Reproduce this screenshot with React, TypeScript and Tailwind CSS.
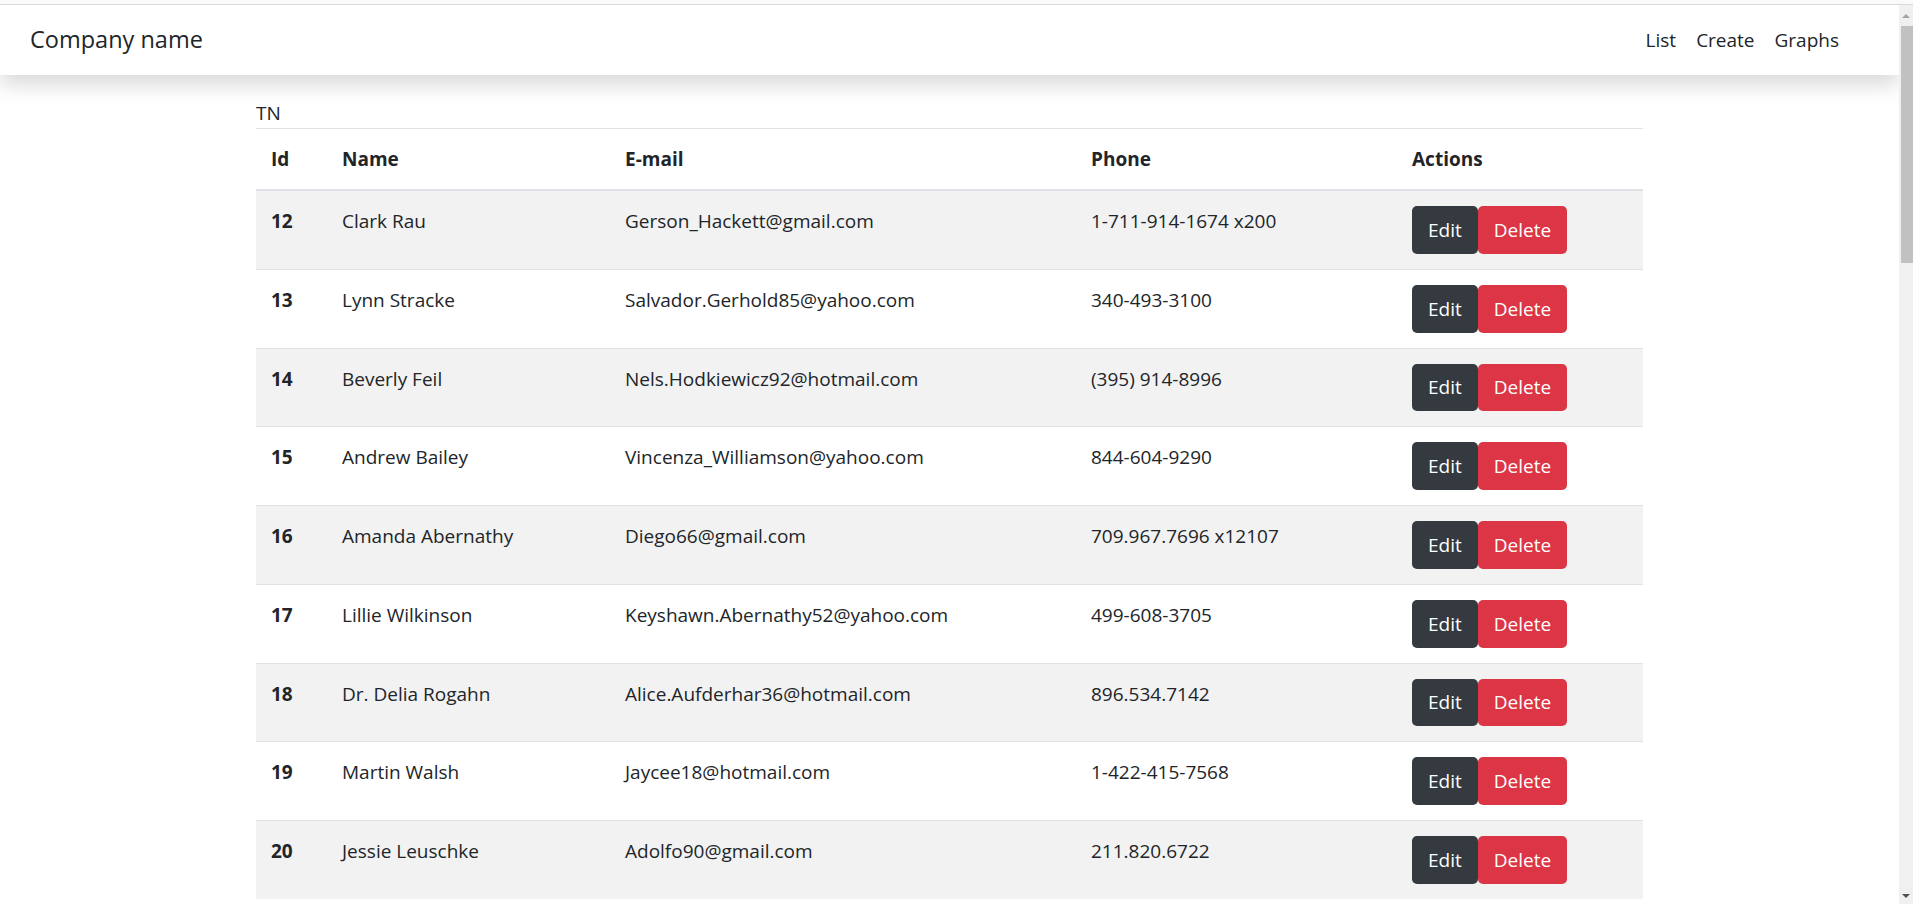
import React from 'react';

interface Person {
  id: number;
  name: string;
  email: string;
  phone: string;
}

const people: Person[] = [
  { id: 12, name: 'Clark Rau', email: 'Gerson_Hackett@gmail.com', phone: '1-711-914-1674 x200' },
  { id: 13, name: 'Lynn Stracke', email: 'Salvador.Gerhold85@yahoo.com', phone: '340-493-3100' },
  { id: 14, name: 'Beverly Feil', email: 'Nels.Hodkiewicz92@hotmail.com', phone: '(395) 914-8996' },
  { id: 15, name: 'Andrew Bailey', email: 'Vincenza_Williamson@yahoo.com', phone: '844-604-9290' },
  { id: 16, name: 'Amanda Abernathy', email: 'Diego66@gmail.com', phone: '709.967.7696 x12107' },
  { id: 17, name: 'Lillie Wilkinson', email: 'Keyshawn.Abernathy52@yahoo.com', phone: '499-608-3705' },
  { id: 18, name: 'Dr. Delia Rogahn', email: 'Alice.Aufderhar36@hotmail.com', phone: '896.534.7142' },
  { id: 19, name: 'Martin Walsh', email: 'Jaycee18@hotmail.com', phone: '1-422-415-7568' },
  { id: 20, name: 'Jessie Leuschke', email: 'Adolfo90@gmail.com', phone: '211.820.6722' },
];

const Navbar: React.FC = () => (
  <nav className="relative z-10 h-[70px] flex items-center justify-between bg-white pl-[30px] pr-[50px] shadow-[0_10px_20px_rgba(0,0,0,0.15)]">
    <span className="text-[23.5px] leading-[1.5]">Company name</span>
    <ul className="flex items-center text-[19px] leading-[1.5]">
      <li><a className="px-[10px]">List</a></li>
      <li><a className="px-[10px]">Create</a></li>
      <li><a className="px-[10px]">Graphs</a></li>
    </ul>
  </nav>
);

const FakeScrollbar: React.FC = () => (
  <div className="w-[14px] flex flex-col bg-[#f0f0f0]">
    <div className="h-[21px] flex items-center justify-center">
      <div className="w-0 h-0 border-l-[4px] border-r-[4px] border-b-[4px] border-l-transparent border-r-transparent border-b-[#a3a3a3]" />
    </div>
    <div className="ml-[2px] h-[237px] bg-[#c1c1c1]" />
    <div className="flex-1" />
    <div className="h-[17px] flex items-center justify-center">
      <div className="w-0 h-0 border-l-[4px] border-r-[4px] border-t-[4px] border-l-transparent border-r-transparent border-t-[#505050]" />
    </div>
  </div>
);

export default function App() {
  return (
    <div className="h-screen flex flex-col overflow-hidden bg-white text-[#212529] font-['Open_Sans',sans-serif]">
      <div className="h-[5px] bg-[#fafafa] border-b border-[#dadada]" />
      <div className="flex flex-1 min-h-0">
        <div className="flex-1 min-w-0 overflow-hidden">
          <Navbar />

          <div className="w-[1387px] mx-auto pt-[23px]">
            <div className="text-[19px] leading-[30px]">TN</div>
            <table className="w-full border-collapse text-[19px] leading-[30px] table-fixed">
              <colgroup>
                <col className="w-[71px]" />
                <col className="w-[283px]" />
                <col className="w-[466px]" />
                <col className="w-[321px]" />
                <col className="w-[246px]" />
              </colgroup>
              <thead>
                <tr className="text-left">
                  <th className="px-[15px] py-[15px] font-bold border-t border-b-2 border-[#dee2e6]">Id</th>
                  <th className="px-[15px] py-[15px] font-bold border-t border-b-2 border-[#dee2e6]">Name</th>
                  <th className="px-[15px] py-[15px] font-bold border-t border-b-2 border-[#dee2e6]">E-mail</th>
                  <th className="px-[15px] py-[15px] font-bold border-t border-b-2 border-[#dee2e6]">Phone</th>
                  <th className="px-[15px] py-[15px] font-bold border-t border-b-2 border-[#dee2e6]">Actions</th>
                </tr>
              </thead>
              <tbody>
                {people.map((p, i) => (
                  <tr key={p.id} className={i % 2 === 0 ? 'bg-[#f2f2f2]' : 'bg-white'}>
                    <td className="px-[15px] py-[15px] align-top font-bold border-t border-[#dee2e6]">{p.id}</td>
                    <td className="px-[15px] py-[15px] align-top border-t border-[#dee2e6]">{p.name}</td>
                    <td className="px-[15px] py-[15px] align-top border-t border-[#dee2e6]">{p.email}</td>
                    <td className="px-[15px] py-[15px] align-top border-t border-[#dee2e6]">{p.phone}</td>
                    <td className="px-[15px] py-[15px] align-top border-t border-[#dee2e6]">
                      <div className="flex">
                        <button className="h-[47.75px] px-[16px] rounded-[5px] bg-[#343a40] text-white">Edit</button>
                        <button className="h-[47.75px] px-[16px] rounded-[5px] bg-[#dc3545] text-white">Delete</button>
                      </div>
                    </td>
                  </tr>
                ))}
              </tbody>
            </table>
          </div>
        </div>
        <FakeScrollbar />
      </div>
    </div>
  );
}
